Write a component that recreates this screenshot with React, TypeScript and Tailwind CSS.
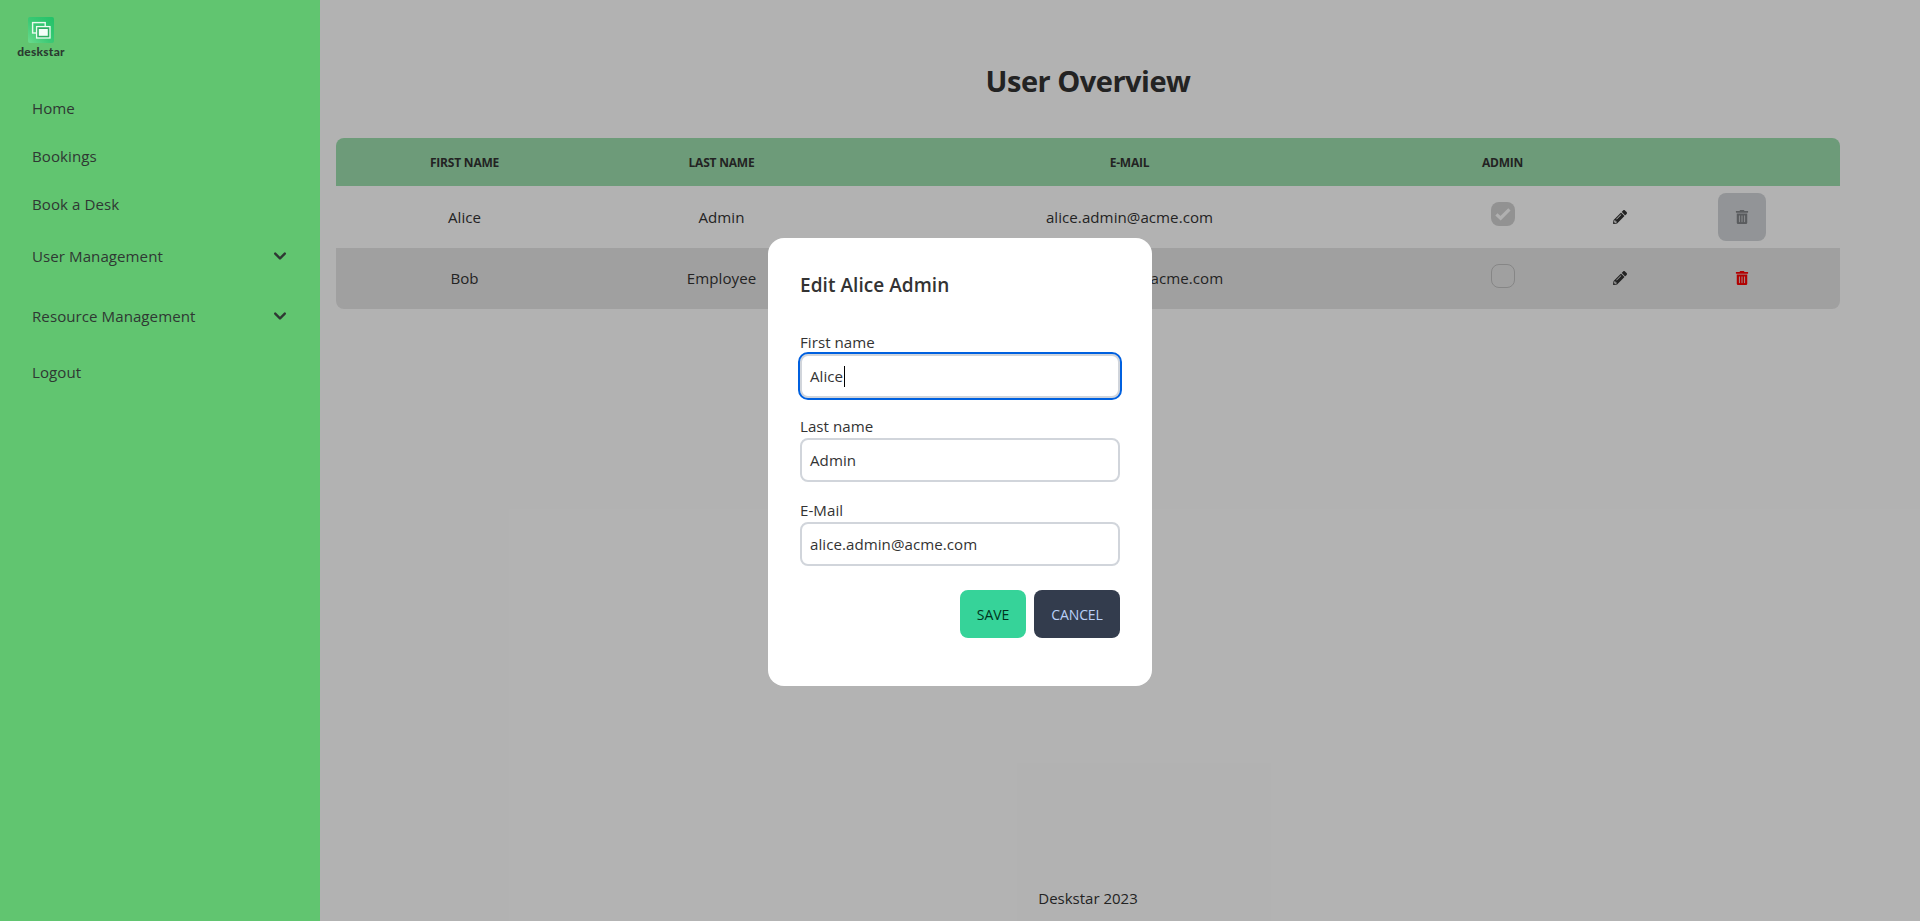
import { FaPencilAlt, FaTrashAlt } from "react-icons/fa";

function Logo() {
  return (
    <div className="ml-px flex w-12 flex-col items-center">
      <svg width="26" height="26" viewBox="0 0 26 26">
        <defs>
          <linearGradient id="tile" x1="0" y1="1" x2="1" y2="0">
            <stop offset="0" stopColor="#6bdb8d" />
            <stop offset="0.45" stopColor="#3bc975" />
            <stop offset="1" stopColor="#22c268" />
          </linearGradient>
        </defs>
        <rect width="26" height="26" rx="2" fill="url(#tile)" />
        <rect x="4.6" y="5.6" width="12.6" height="10.4" fill="none" stroke="#e9faee" strokeWidth="1.4" />
        <rect x="8.6" y="9.6" width="13.4" height="11.4" fill="#2fae62" stroke="#effcf3" strokeWidth="1.3" />
        <rect x="10.8" y="12" width="9" height="6.8" fill="#f6fef9" />
      </svg>
      <span className="mt-[3px] font-['Lato'] text-[12px] leading-3 font-black tracking-[0.25px] text-[#2b3a30]">
        deskstar
      </span>
    </div>
  );
}

function MenuLink({ label }: { label: string }) {
  return (
    <li>
      <a className="block px-4 py-3 leading-6">{label}</a>
    </li>
  );
}

function MenuGroup({ label }: { label: string }) {
  return (
    <li className="flex h-[60px] items-start justify-between pt-4 pr-3 pl-4 leading-6">
      <span>{label}</span>
      <svg className="h-6 w-6" viewBox="0 0 20 20" fill="currentColor">
        <path
          fillRule="evenodd"
          d="M5.293 7.293a1 1 0 011.414 0L10 10.586l3.293-3.293a1 1 0 111.414 1.414l-4 4a1 1 0 01-1.414 0l-4-4a1 1 0 010-1.414z"
        />
      </svg>
    </li>
  );
}

function Sidebar() {
  return (
    <aside className="flex w-80 shrink-0 flex-col bg-[#61c570] px-4 pt-[17px] text-[15.1px] tracking-[0.05px] text-[#2f3833]">
      <Logo />
      <ul className="mt-[26px]">
        <MenuLink label="Home" />
        <MenuLink label="Bookings" />
        <MenuLink label="Book a Desk" />
        <MenuGroup label="User Management" />
        <MenuGroup label="Resource Management" />
        <MenuLink label="Logout" />
      </ul>
    </aside>
  );
}

const columns =
  "grid grid-cols-[257px_257px_559px_187px_48px_196px] items-center justify-items-center";

function Checkbox({ checked }: { checked: boolean }) {
  return checked ? (
    <span className="mb-1.5 flex h-6 w-6 items-center justify-center rounded-lg bg-[#d2d2d2]">
      <svg width="16" height="14" viewBox="0 0 16 14" fill="none" stroke="#fdfdfd" strokeWidth="3.2">
        <path d="M1.4 7.4L5.6 11.2L14.4 2.4" />
      </svg>
    </span>
  ) : (
    <span className="mb-1.5 h-6 w-6 rounded-lg border border-[#c0c0c0]" />
  );
}

function UserTable() {
  return (
    <div className="overflow-hidden rounded-lg text-[15.1px] tracking-[0.05px]">
      <div className={`${columns} h-12 bg-[#9cdfae] pt-px text-[12px] font-bold tracking-[-0.2px]`}>
        <span>FIRST NAME</span>
        <span>LAST NAME</span>
        <span>E-MAIL</span>
        <span>ADMIN</span>
        <span />
        <span />
      </div>
      <div className={`${columns} h-[62px]`}>
        <span>Alice</span>
        <span>Admin</span>
        <span>alice.admin@acme.com</span>
        <Checkbox checked />
        <FaPencilAlt size={14} />
        <button className="flex h-12 w-12 items-center justify-center rounded-lg bg-[#d2d5d8] text-[#828588]">
          <FaTrashAlt size={14} />
        </button>
      </div>
      <div className={`${columns} h-[61px] bg-[#e6e6e6]`}>
        <span>Bob</span>
        <span>Employee</span>
        <span>bob.employee@acme.com</span>
        <Checkbox checked={false} />
        <FaPencilAlt size={14} className="mb-px" />
        <FaTrashAlt size={14} className="mb-px text-[#ff0000]" />
      </div>
    </div>
  );
}

function Field({ label, value, focused = false }: { label: string; value: string; focused?: boolean }) {
  return (
    <div className="mb-4">
      <div className="h-6 leading-6">{label}</div>
      <div
        className={
          focused
            ? "flex h-11 items-center rounded-lg border-2 border-[#d1d5db] px-2 outline-2 outline-[#0060df]"
            : "flex h-11 items-center rounded-lg border-2 border-[#d1d5db] px-2"
        }
      >
        <span>{value}</span>
        {focused && <span className="ml-px h-[21px] w-px bg-black" />}
      </div>
    </div>
  );
}

function EditDialog() {
  return (
    <div className="h-[448px] w-96 rounded-2xl bg-white p-8 text-[15.1px] tracking-[0.05px] text-[#333333]">
      <h2 className="mb-8 h-7 pt-px text-[19px] leading-7 font-semibold tracking-[0.05px]">Edit Alice Admin</h2>
      <Field label="First name" value="Alice" focused />
      <Field label="Last name" value="Admin" />
      <Field label="E-Mail" value="alice.admin@acme.com" />
      <div className="mt-6 flex justify-end gap-2 text-[14px] font-medium tracking-[-0.1px]">
        <button className="h-12 w-[66px] rounded-lg bg-[#36d399] text-[#003320]">SAVE</button>
        <button className="h-12 w-[86px] rounded-lg bg-[#333c4d] text-[#b9d0f8]">CANCEL</button>
      </div>
    </div>
  );
}

export default function App() {
  return (
    <div className="flex h-[921px] overflow-hidden bg-white font-['Open_Sans','Noto_Sans',sans-serif]">
      <Sidebar />
      <main className="relative flex flex-1 flex-col pt-[61px] pr-20 pl-4 text-[#333333]">
        <h1 className="mb-[37px] h-10 text-center text-[29px] leading-10 font-bold tracking-[-0.5px]">User Overview</h1>
        <UserTable />
        <footer className="mt-auto pb-[11px] text-center text-[15px] leading-6">Deskstar 2023</footer>
        <div className="absolute inset-0 bg-black/30" />
      </main>
      <div className="fixed inset-0 flex items-center justify-center pt-[3px]">
        <EditDialog />
      </div>
    </div>
  );
}
